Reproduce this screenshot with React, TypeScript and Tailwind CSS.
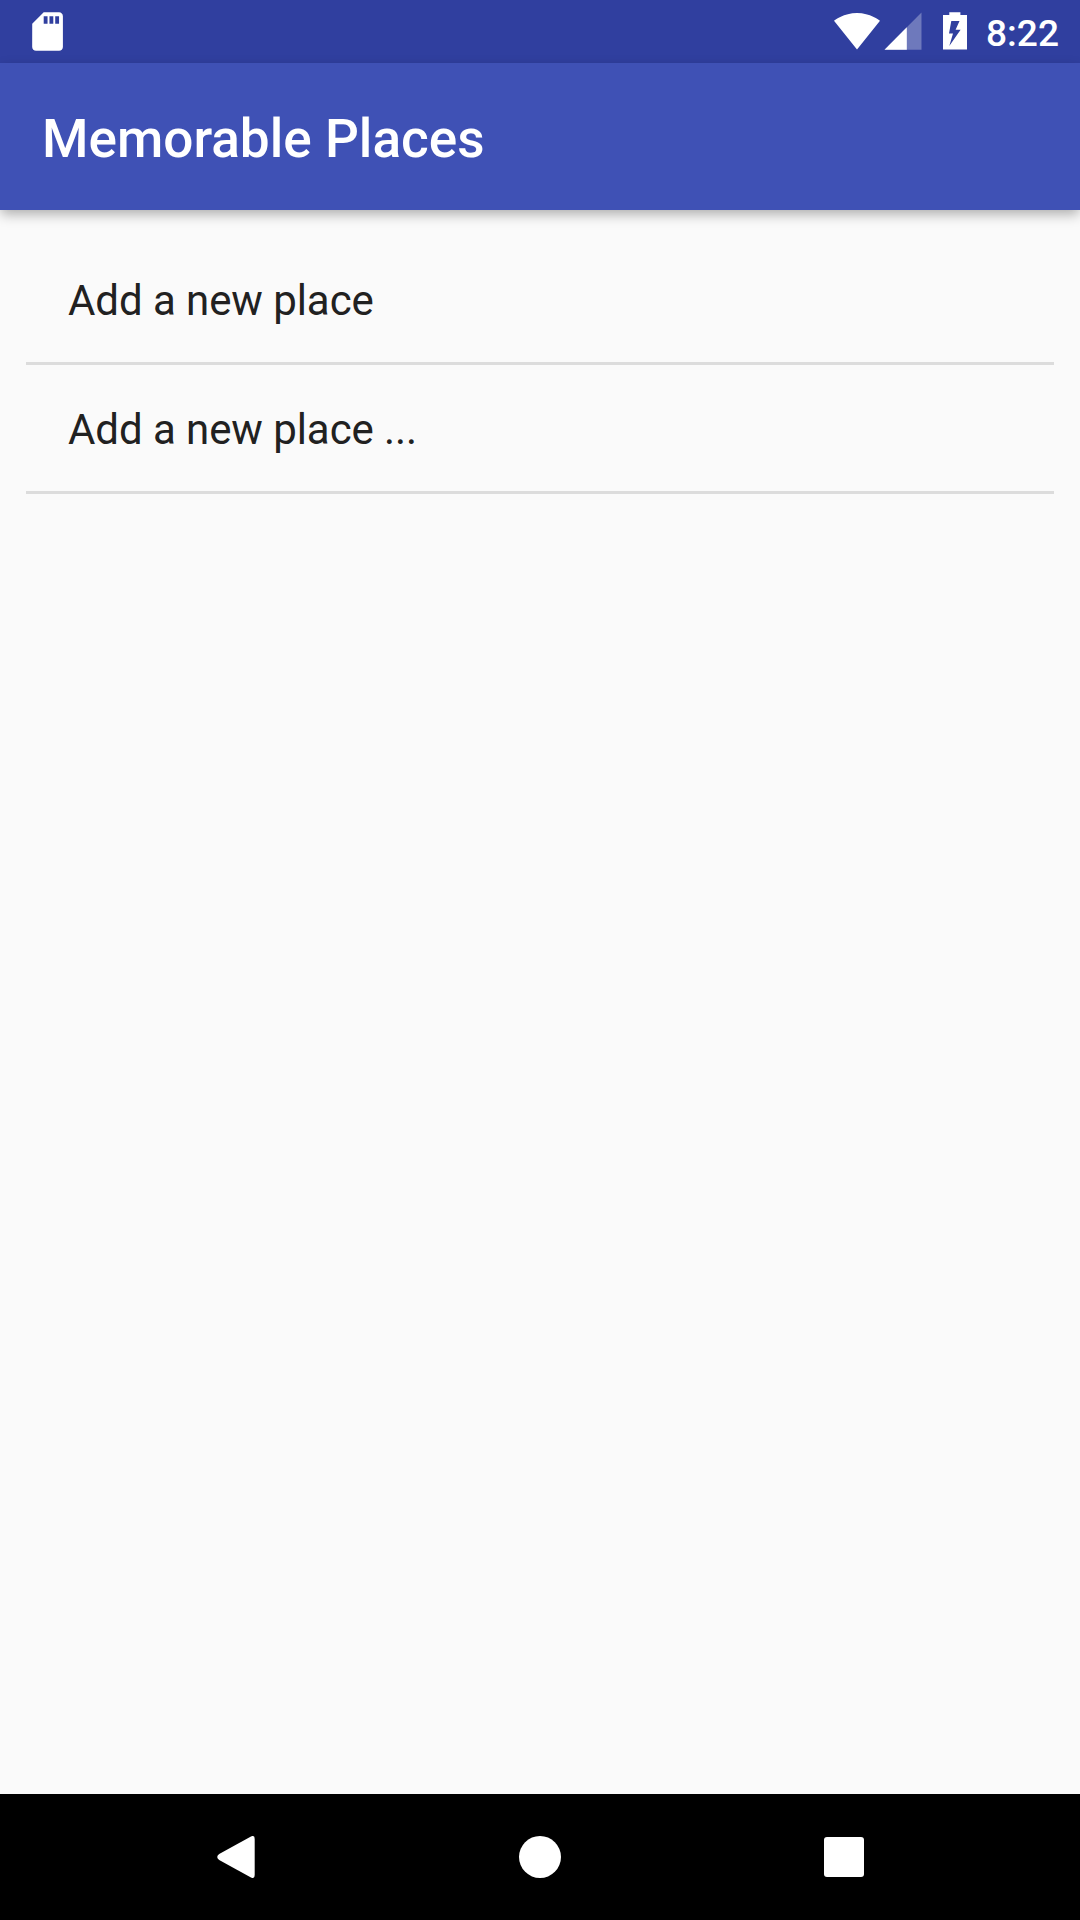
import React from "react";

const places = ["Add a new place", "Add a new place ..."];

function StatusBar() {
  return (
    <div className="flex h-[63px] shrink-0 items-start justify-between bg-[#303f9f] text-white">
      <svg className="h-[63px] w-20" viewBox="0 0 80 63" fill="currentColor">
        <path
          transform="translate(24.500 8.500) scale(1.92)"
          d="M18 2h-8L4.02 8 4 20c0 1.1.9 2 2 2h12c1.1 0 2-.9 2-2V4c0-1.1-.9-2-2-2zm-6 6h-2V4h2v4zm3 0h-2V4h2v4zm3 0h-2V4h2v4z"
        />
      </svg>
      <div className="flex h-full items-start">
        <svg className="h-[63px] w-[48px]" viewBox="833 0 48 63" fill="currentColor">
          <path d="M857 49.4L880 20.8C879.1 20.1 870.3 12.9 857 12.9S834.900 20.100 834 20.8Z" />
        </svg>
        <svg className="h-[63px] w-[50px]" viewBox="881 0 50 63" fill="currentColor">
          <path d="M921.500 12.500V49.700H884.500Z" fillOpacity="0.3" />
          <path d="M906.800 27.300V49.700H884.500Z" />
        </svg>
        <svg className="h-[63px] w-[42px]" viewBox="931 0 42 63" fill="currentColor">
          <path
            fillRule="evenodd"
            d="M949.300 12.200H960.400V15H967V49.600H943V15H949.300ZM951.300 21L949 33.500H953L949.300 46L960.600 29.800H955.600L959.500 21Z"
          />
        </svg>
        <span className="ml-[13px] mr-[21px] text-[37.1px] font-medium leading-[67px]">8:22</span>
      </div>
    </div>
  );
}

function AppBar() {
  return (
    <header className="relative z-10 flex h-[147px] shrink-0 items-center bg-[#3f51b5] px-[42px] pt-[7px] shadow-[0_5px_12px_-1px_rgba(0,0,0,0.32)]">
      <h1 className="text-[53.15px] font-medium leading-none text-white">Memorable Places</h1>
    </header>
  );
}

function NavBar() {
  return (
    <nav className="flex h-[126px] shrink-0 items-center justify-center bg-black text-white">
      <button className="flex w-[304px] justify-center" aria-label="Back">
        <svg className="size-[42px]" viewBox="0 0 42 42" fill="currentColor">
          <path d="M35.500 .7Q39.700-1.500 39.700 3V39Q39.700 43.500 35.500 41.300L4.200 23.900Q.2 21 4.200 18.100Z" />
        </svg>
      </button>
      <button className="flex w-[304px] justify-center" aria-label="Home">
        <span className="size-[42px] rounded-full bg-white" />
      </button>
      <button className="flex w-[304px] justify-center" aria-label="Recents">
        <span className="size-[40px] rounded-[3px] bg-white" />
      </button>
    </nav>
  );
}

export default function App() {
  return (
    <div className="flex h-[1920px] w-[1080px] flex-col overflow-hidden bg-[#fafafa] font-['Roboto',sans-serif]">
      <StatusBar />
      <AppBar />
      <ul className="flex-1 p-[26px]">
        {places.map((place) => (
          <li
            key={place}
            className="flex h-[129px] items-center border-b-[3px] border-[#dcdcdc] px-[42px] pt-1 text-[42px] leading-none tracking-[-0.07px] text-[#212121]"
          >
            {place}
          </li>
        ))}
      </ul>
      <NavBar />
    </div>
  );
}
